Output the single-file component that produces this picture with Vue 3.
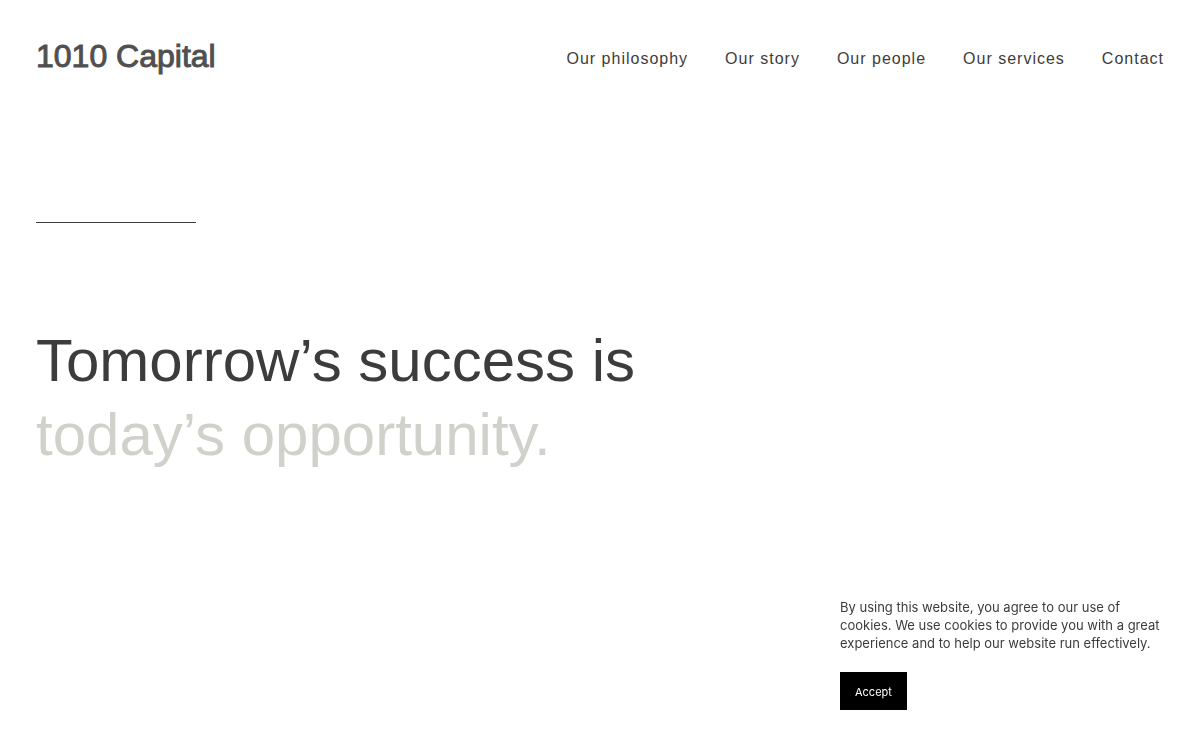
<script setup>
const links = [
  { label: 'Our philosophy', href: '#philosophy' },
  { label: 'Our story', href: '#story' },
  { label: 'Our people', href: '#people' },
  { label: 'Our services', href: '#services' },
  { label: 'Contact', href: '#contact' },
]
</script>

<template>
  <div class="page">
    <header class="header">
      <a class="logo" href="#home">1010 Capital</a>
      <nav class="nav" aria-label="Main">
        <a v-for="link in links" :key="link.href" :href="link.href">{{ link.label }}</a>
      </nav>
    </header>
    <main class="hero">
      <hr class="rule" />
      <h1 class="title">Tomorrow’s success is<br /><span class="muted">today’s opportunity.</span></h1>
    </main>
    <aside class="cookies" aria-label="Cookies">
      <p>By using this website, you agree to our use of cookies. We use cookies to provide you with a great experience and to help our website run effectively.</p>
      <button type="button">Accept</button>
    </aside>
  </div>
</template>

<style>
body {
  margin: 0;
  background: #fff;
}
</style>

<style scoped>
.page {
  min-height: 100vh;
  box-sizing: border-box;
  padding: 36px;
  font-family: "Liberation Sans", Arial, sans-serif;
  color: #3c3c3c;
}
.header {
  display: flex;
  align-items: flex-start;
  justify-content: space-between;
}
.logo {
  font-size: 32px;
  line-height: 40px;
  color: #505050;
  -webkit-text-stroke: 1px #505050;
  text-decoration: none;
}
.nav {
  display: flex;
  gap: 37px;
}
.nav a {
  font-size: 16px;
  line-height: 46px;
  letter-spacing: 1px;
  color: inherit;
  text-decoration: none;
}
.rule {
  width: 160px;
  height: 1px;
  margin: 140px 0 0;
  border: 0;
  background: #3c3c3c;
}
.title {
  margin: 101px 0 0;
  font-size: 60px;
  line-height: 74px;
  font-weight: 400;
}
.muted {
  color: #d0d1cb;
}
.cookies {
  position: fixed;
  right: 40px;
  bottom: 40px;
  width: 320px;
  font-family: Inter, "Liberation Sans", sans-serif;
}
.cookies p {
  margin: 0 0 20px;
  font-size: 13px;
  line-height: 18px;
}
.cookies button {
  display: block;
  padding: 13px 15px 11px;
  border: 0;
  background: #000;
  color: #fff;
  font-family: inherit;
  font-size: 11px;
  line-height: 14px;
}
</style>
